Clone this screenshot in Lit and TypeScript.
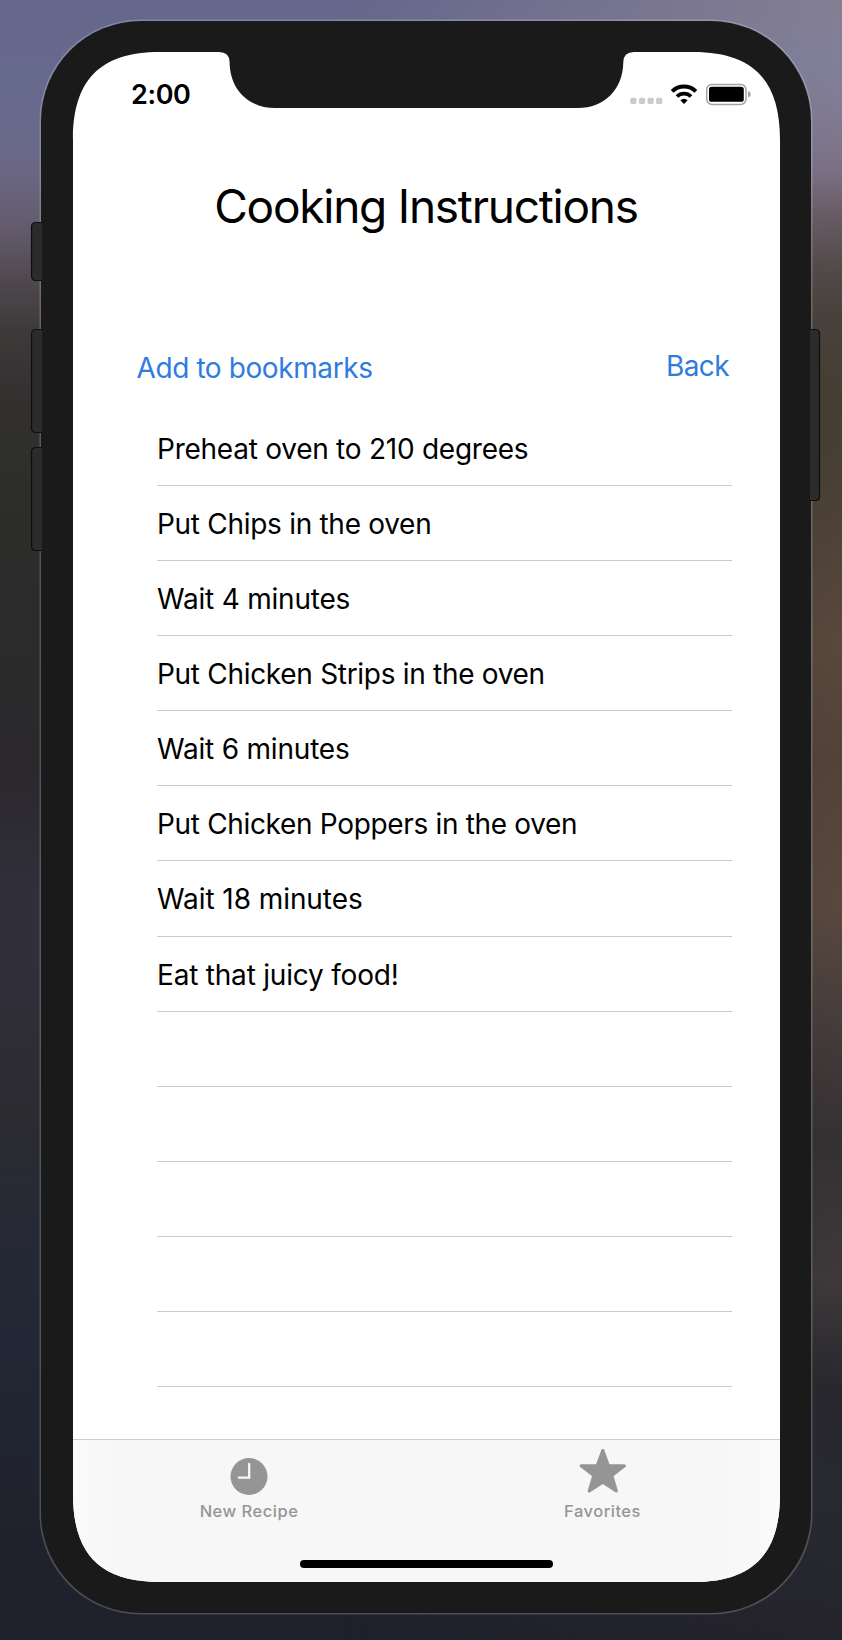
import { LitElement, html, css, svg } from "lit";
import { customElement, property } from "lit/decorators.js";
import { styleMap } from "lit/directives/style-map.js";

interface Step {
  text: string;
  tracking: number;
}

const STEPS: Step[] = [
  { text: "Preheat oven to 210 degrees", tracking: -0.25 },
  { text: "Put Chips in the oven", tracking: -0.29 },
  { text: "Wait 4 minutes", tracking: -0.21 },
  { text: "Put Chicken Strips in the oven", tracking: -0.3 },
  { text: "Wait 6 minutes", tracking: -0.2 },
  { text: "Put Chicken Poppers in the oven", tracking: -0.33 },
  { text: "Wait 18 minutes", tracking: -0.07 },
  { text: "Eat that juicy food!", tracking: -0.2 },
];
const EMPTY_ROWS = 5;

/** Phone body, side buttons and the notched screen. */
@customElement("device-frame")
class DeviceFrame extends LitElement {
  static styles = css`
    :host {
      display: block;
    }
    svg {
      display: block;
    }
  `;

  render() {
    const leftButtons = [
      [222, 59],
      [329, 104],
      [447, 104],
    ];
    return html`<svg width="842" height="1640" viewBox="0 0 842 1640">
      <rect x="39.5" y="19.5" width="773" height="1595" rx="101" fill="#fff" fill-opacity="0.2" />
      <rect x="41" y="21" width="770" height="1592" rx="100" fill="#1a1a1a" />
      ${leftButtons.map(
        ([y, h]) => svg`<path
          d="M42 ${y + 0.5}H36Q31.5 ${y + 0.5} 31.5 ${y + 5}V${y + h - 5}Q31.5 ${y + h - 0.5} 36 ${y + h - 0.5}H42"
          fill="#2b2b2b" stroke="#0e0e0e" stroke-width="1.2" />`
      )}
      <path
        d="M810 329.5H815.5Q819.5 329.5 819.5 333.5V496.5Q819.5 500.5 815.5 500.5H810"
        fill="#2b2b2b" stroke="#0e0e0e" stroke-width="1.2"
      />
      <path
        fill="#fff"
        d="M73 140C73 80 100 52 160 52H219Q229.3 52 229.6 62C229.8 90 249 108 275 108H578C604 108 623 90 623.3 62Q623.6 52 634 52H693C753 52 780 80 780 140V1494C780 1554 753 1582 693 1582H160C100 1582 73 1554 73 1494Z"
      />
    </svg>`;
  }
}

@customElement("status-bar")
class StatusBar extends LitElement {
  static styles = css`
    :host {
      display: flex;
      justify-content: space-between;
      height: 84px;
      box-sizing: border-box;
      padding: 27px 27px 0 58px;
    }
    .time {
      font-size: 27px;
      font-weight: 600;
      letter-spacing: -0.4px;
      line-height: 32px;
    }
    svg {
      display: block;
    }
  `;

  render() {
    return html`
      <span class="time">2:00</span>
      <svg width="124" height="30" viewBox="629 79 124 30">
        ${[630.3, 639, 647.6, 656.1].map(
          (x) => svg`<rect x=${x} y="97.8" width="6.1" height="6.3" rx="1.5" fill="#cbcbcb" />`
        )}
        <g fill="none" stroke="#000">
          <path d="M672.1 91.3A17.2 17.2 0 0 1 695.9 91.3" stroke-width="3.9" />
          <path d="M677 96.5A10 10 0 0 1 691 96.5" stroke-width="3.7" />
        </g>
        <path d="M684 104L680.3 100.3A5.3 5.3 0 0 1 687.7 100.3Z" />
        <rect x="706.7" y="84.4" width="39.3" height="20" rx="5.3" fill="none" stroke="#a3a3a3" stroke-width="1.5" />
        <rect x="709" y="86.8" width="34.8" height="15" rx="2.6" />
        <path d="M748 91Q750.8 91.8 750.8 94.2T748 97.4Z" fill="#a3a3a3" />
      </svg>
    `;
  }
}

@customElement("tab-item")
class TabItem extends LitElement {
  @property() label = "";
  @property() icon = "";

  static styles = css`
    :host {
      display: flex;
      flex-direction: column;
      align-items: center;
      flex: 1;
      padding: 6px 1.5px 0 0;
      color: #959595;
    }
    svg {
      display: block;
    }
    .label {
      font-size: 16.5px;
      font-weight: 500;
      letter-spacing: 0.5px;
      line-height: 20px;
      margin-top: 5px;
      white-space: nowrap;
    }
  `;

  render() {
    const shape =
      this.icon === "clock"
        ? svg`<circle cx="25" cy="30.5" r="18.5" fill="#959595" />
            <path d="M25.2 18V31.6H14.8" fill="none" stroke="#f7f7f7" stroke-width="2.3" stroke-linecap="round" />`
        : svg`<path
            d="M24.8 4.6L30.4 19.8H46.4L33.8 29.6L38.3 45L24.8 36.1L11.3 45L15.8 29.6L3.2 19.8H19.2Z"
            fill="#959595" stroke="#959595" stroke-width="3.2" stroke-linejoin="round" />`;
    return html`
      <svg width="50" height="50" viewBox="0 0 50 50">${shape}</svg>
      <span class="label">${this.label}</span>
    `;
  }
}

@customElement("app-root")
class AppRoot extends LitElement {
  static styles = css`
    :host {
      display: block;
      position: relative;
      width: 842px;
      height: 1640px;
      overflow: hidden;
      box-sizing: border-box;
      padding: 52px 62px 58px 73px;
      font-family: Inter, "Noto Sans", sans-serif;
      color: #000;
      background: linear-gradient(
        #857f93 0,
        #82809a 60px,
        #817c93 110px,
        #7b7186 170px,
        #6b5e68 210px,
        #544b4b 265px,
        #49433d 310px,
        #463e32 400px,
        #4a4036 480px,
        #59493e 640px,
        #53443a 760px,
        #59493f 910px,
        #453c3b 1030px,
        #353133 1140px,
        #3f393b 1280px,
        #28282d 1390px,
        #292a30 1500px,
        #25242d 1640px
      );
    }
    .wallpaper {
      position: absolute;
      inset: 0;
      background: linear-gradient(
        #65668b 0,
        #666a8d 80px,
        #69698a 140px,
        #6a6680 180px,
        #61596a 235px,
        #4d474c 285px,
        #3c3939 335px,
        #323130 400px,
        #2c2c2b 520px,
        #2b2b2b 640px,
        #2a282b 760px,
        #312f3b 900px,
        #302e38 1000px,
        #2b2b30 1120px,
        #272a35 1200px,
        #222735 1350px,
        #20232e 1500px,
        #1e202b 1640px
      );
      mask-image: linear-gradient(to right, #000 40%, transparent);
    }
    device-frame {
      position: absolute;
      inset: 0;
    }
    .screen {
      position: relative;
      display: flex;
      flex-direction: column;
      height: 1530px;
    }
    h1 {
      margin: 42px 0 0;
      text-align: center;
      font-size: 46px;
      font-weight: 400;
      letter-spacing: -1.24px;
      line-height: 56px;
      text-indent: -1px;
    }
    .actions {
      display: flex;
      justify-content: space-between;
      align-items: flex-start;
      height: 124.7px;
      box-sizing: border-box;
      padding: 60px 51px 0 63.5px;
      margin-top: 52px;
    }
    .link {
      font: inherit;
      font-size: 28px;
      line-height: 40px;
      color: #2f7ce0;
      background: none;
      border: 0;
      padding: 0;
      white-space: nowrap;
    }
    .add {
      letter-spacing: -0.4px;
      margin-top: 2px;
    }
    .back {
      letter-spacing: -0.6px;
    }
    ul {
      list-style: none;
      margin: 0 48px 0 84px;
      padding: 0;
      flex: 1;
      min-height: 0;
      overflow: hidden;
    }
    li {
      height: 75.13px;
      box-sizing: border-box;
      border-bottom: 1px solid #cbcccb;
      font-size: 28px;
      line-height: 76px;
      white-space: nowrap;
    }
    .tabs {
      display: flex;
      flex-direction: column;
      height: 143px;
      box-sizing: border-box;
      border-top: 1.5px solid #cfcfcf;
      background: linear-gradient(to right, #fafafa, #f7f7f7 50px, #f7f7f7 645px, #fafafa);
      clip-path: path("M0 0H707V55C707 115 680 143 620 143H87C27 143 0 115 0 55Z");
    }
    .items {
      display: flex;
      flex: 1;
    }
    .home {
      width: 253px;
      height: 8.4px;
      margin: 0 auto 13.6px;
      border-radius: 5px;
      background: #000;
    }
  `;

  render() {
    return html`
      <div class="wallpaper"></div>
      <device-frame></device-frame>
      <main class="screen">
        <status-bar></status-bar>
        <h1>Cooking Instructions</h1>
        <div class="actions">
          <button class="link add">Add to bookmarks</button>
          <button class="link back">Back</button>
        </div>
        <ul>
          ${STEPS.map(
            (s) => html`<li style=${styleMap({ letterSpacing: `${s.tracking}px` })}>${s.text}</li>`
          )}
          ${Array.from({ length: EMPTY_ROWS }, () => html`<li></li>`)}
        </ul>
        <nav class="tabs">
          <div class="items">
            <tab-item label="New Recipe" icon="clock"></tab-item>
            <tab-item label="Favorites" icon="star"></tab-item>
          </div>
          <div class="home"></div>
        </nav>
      </main>
    `;
  }
}
